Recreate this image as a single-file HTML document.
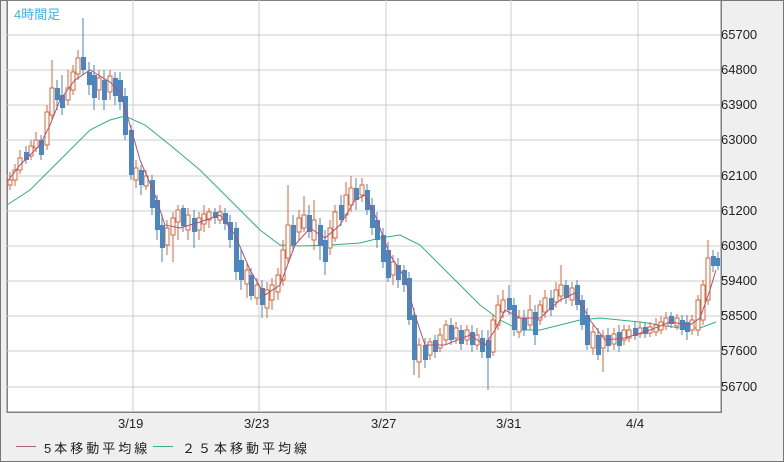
<!DOCTYPE html>
<html><head><meta charset="utf-8"><style>
html,body{margin:0;padding:0;width:784px;height:462px;overflow:hidden;background:#efefef;font-family:"Liberation Sans","Noto Sans CJK JP",sans-serif;}
#wrap{position:absolute;left:0;top:0;width:782px;height:460px;border:1px solid #777;background:#efefef;}
.yl{position:absolute;left:721px;font-size:13px;color:#222;}
.xl{position:absolute;top:416px;font-size:13px;color:#222;}
.lg{position:absolute;top:438px;font-size:13px;color:#222;letter-spacing:3px;}
svg .u{fill:#fff;stroke:#d9643a;stroke-width:1}
svg .d{fill:#4a86c0}
svg path,svg rect,svg line{shape-rendering:crispEdges}
</style></head><body>
<div id="wrap"></div>
<svg width="784" height="462" style="position:absolute;left:0;top:0">
<rect x="7" y="0" width="714" height="412" fill="#fff" stroke="#808080" stroke-width="1.5"/>
<g stroke="#ccc">
<line x1="7" x2="721" y1="35" y2="35"/><line x1="7" x2="721" y1="70" y2="70"/><line x1="7" x2="721" y1="105" y2="105"/><line x1="7" x2="721" y1="140" y2="140"/><line x1="7" x2="721" y1="176" y2="176"/><line x1="7" x2="721" y1="211" y2="211"/><line x1="7" x2="721" y1="246" y2="246"/><line x1="7" x2="721" y1="281" y2="281"/><line x1="7" x2="721" y1="316" y2="316"/><line x1="7" x2="721" y1="351" y2="351"/><line x1="7" x2="721" y1="387" y2="387"/>
<line x1="133" x2="133" y1="0" y2="412"/><line x1="259" x2="259" y1="0" y2="412"/><line x1="386" x2="386" y1="0" y2="412"/><line x1="511" x2="511" y1="0" y2="412"/><line x1="638" x2="638" y1="0" y2="412"/>
</g>
<polyline fill="none" stroke="#2fb07a" points="7,205 30,190 60,160 90,130 110,120 125,116 145,125 170,145 200,170 230,200 260,230 280,245 300,246 330,245 360,243 380,238 400,235 420,245 440,265 460,285 480,305 500,320 520,330 540,330 560,325 580,320 600,318 620,320 640,322 660,325 680,328 700,328 716,322"/>
<path stroke="#d9643a" fill="none" d="M10 172V190M15 164V186M20 150V174M31 140V160M36 132V152M47 105V150M52 60V120M68 70V105M73 65V95M78 50V80M99 70V100M110 70V100M136 160V188M146 170V190M167 220V255M173 212V262M178 205V240M188 208V240M199 212V240M204 205V232M209 208V228M220 205V224M247 262V298M257 278V305M267 282V318M272 278V310M278 268V300M283 240V286M288 185V264M299 210V240M304 196V232M314 200V250M330 220V255M335 205V242M346 182V222M351 176V212M362 178V202M393 255V285M419 338V378M430 338V360M440 328V352M446 320V345M456 322V344M467 325V345M477 328V350M493 315V356M498 295V330M503 290V318M519 310V338M530 295V330M540 300V325M545 290V318M556 282V308M561 265V302M572 282V306M593 325V355M603 330V372M614 328V350M624 325V345M629 325V342M640 322V338M650 322V337M656 318V336M661 316V334M666 312V330M677 314V330M692 315V335M698 295V336M703 280V325M708 240V305"/>
<path stroke="#4a86c0" fill="none" d="M26 146V164M41 135V160M57 80V110M62 75V115M83 18V75M89 62V95M94 65V110M104 70V110M115 72V105M120 72V110M125 88V140M131 125V180M141 165V195M152 175V215M157 195V240M162 215V262M183 205V232M194 210V248M215 208V224M225 208V230M230 215V248M236 222V280M241 250V290M251 268V300M262 280V318M293 215V252M309 205V238M320 218V260M325 230V275M341 195V226M356 178V210M367 184V215M372 198V235M377 212V248M383 228V268M388 242V282M398 258V288M404 265V292M409 272V325M414 308V375M425 338V368M435 335V358M451 318V345M461 325V350M472 325V352M482 330V358M488 330V390M509 285V315M514 298V336M524 310V336M535 305V345M551 290V316M566 280V304M577 280V310M582 295V330M587 308V350M598 328V360M608 328V352M619 325V352M635 322V340M645 322V338M671 312V328M682 315V335M687 315V340M713 250V272M718 252V270"/>
<g class="u">
<rect x="8" y="180" width="4" height="5"/><rect x="13" y="170" width="4" height="10"/><rect x="18" y="158" width="4" height="12"/><rect x="29" y="146" width="4" height="10"/><rect x="34" y="140" width="4" height="8"/><rect x="45" y="112" width="4" height="33"/><rect x="50" y="88" width="4" height="27"/><rect x="66" y="88" width="4" height="12"/><rect x="71" y="72" width="4" height="18"/><rect x="76" y="58" width="4" height="16"/><rect x="97" y="78" width="4" height="12"/><rect x="108" y="76" width="4" height="16"/><rect x="134" y="168" width="4" height="12"/><rect x="144" y="176" width="4" height="10"/><rect x="165" y="228" width="4" height="17"/><rect x="171" y="218" width="4" height="17"/><rect x="176" y="210" width="4" height="12"/><rect x="186" y="215" width="4" height="15"/><rect x="197" y="218" width="4" height="12"/><rect x="202" y="214" width="4" height="10"/><rect x="207" y="212" width="4" height="8"/><rect x="218" y="212" width="4" height="8"/><rect x="245" y="270" width="4" height="14"/><rect x="255" y="285" width="4" height="13"/><rect x="265" y="290" width="4" height="18"/><rect x="270" y="285" width="4" height="15"/><rect x="276" y="275" width="4" height="17"/><rect x="281" y="250" width="4" height="30"/><rect x="286" y="225" width="4" height="33"/><rect x="297" y="218" width="4" height="14"/><rect x="302" y="215" width="4" height="13"/><rect x="312" y="220" width="4" height="20"/><rect x="328" y="228" width="4" height="20"/><rect x="333" y="212" width="4" height="26"/><rect x="344" y="195" width="4" height="20"/><rect x="349" y="188" width="4" height="17"/><rect x="360" y="185" width="4" height="10"/><rect x="391" y="262" width="4" height="13"/><rect x="417" y="345" width="4" height="17"/><rect x="428" y="342" width="4" height="13"/><rect x="438" y="335" width="4" height="13"/><rect x="444" y="325" width="4" height="15"/><rect x="454" y="328" width="4" height="10"/><rect x="465" y="330" width="4" height="10"/><rect x="475" y="335" width="4" height="10"/><rect x="491" y="320" width="4" height="32"/><rect x="496" y="305" width="4" height="20"/><rect x="501" y="300" width="4" height="12"/><rect x="517" y="318" width="4" height="14"/><rect x="528" y="310" width="4" height="15"/><rect x="538" y="305" width="4" height="15"/><rect x="543" y="298" width="4" height="14"/><rect x="554" y="290" width="4" height="12"/><rect x="559" y="285" width="4" height="11"/><rect x="570" y="288" width="4" height="12"/><rect x="591" y="332" width="4" height="16"/><rect x="601" y="336" width="4" height="12"/><rect x="612" y="334" width="4" height="10"/><rect x="622" y="330" width="4" height="10"/><rect x="627" y="330" width="4" height="8"/><rect x="638" y="328" width="4" height="6"/><rect x="648" y="327" width="4" height="6"/><rect x="654" y="325" width="4" height="7"/><rect x="659" y="322" width="4" height="8"/><rect x="664" y="318" width="4" height="8"/><rect x="675" y="318" width="4" height="8"/><rect x="690" y="320" width="4" height="10"/><rect x="696" y="300" width="4" height="30"/><rect x="701" y="285" width="4" height="35"/><rect x="706" y="258" width="4" height="42"/>
</g>
<g class="d">
<rect x="24" y="152" width="5" height="8"/><rect x="39" y="140" width="5" height="15"/><rect x="55" y="88" width="5" height="12"/><rect x="60" y="95" width="5" height="13"/><rect x="81" y="57" width="5" height="13"/><rect x="87" y="72" width="5" height="13"/><rect x="92" y="75" width="5" height="23"/><rect x="102" y="80" width="5" height="20"/><rect x="113" y="78" width="5" height="18"/><rect x="118" y="80" width="5" height="22"/><rect x="123" y="96" width="5" height="39"/><rect x="129" y="130" width="5" height="45"/><rect x="139" y="170" width="5" height="15"/><rect x="150" y="180" width="5" height="28"/><rect x="155" y="200" width="5" height="30"/><rect x="160" y="225" width="5" height="23"/><rect x="181" y="208" width="5" height="18"/><rect x="192" y="218" width="5" height="14"/><rect x="213" y="212" width="5" height="6"/><rect x="223" y="213" width="5" height="11"/><rect x="228" y="222" width="5" height="18"/><rect x="234" y="228" width="5" height="44"/><rect x="239" y="260" width="5" height="20"/><rect x="249" y="275" width="5" height="21"/><rect x="260" y="288" width="5" height="17"/><rect x="291" y="225" width="5" height="20"/><rect x="307" y="215" width="5" height="17"/><rect x="318" y="225" width="5" height="21"/><rect x="323" y="240" width="5" height="22"/><rect x="339" y="205" width="5" height="15"/><rect x="354" y="188" width="5" height="12"/><rect x="365" y="190" width="5" height="20"/><rect x="370" y="205" width="5" height="23"/><rect x="375" y="220" width="5" height="20"/><rect x="381" y="235" width="5" height="27"/><rect x="386" y="250" width="5" height="28"/><rect x="396" y="265" width="5" height="15"/><rect x="402" y="270" width="5" height="15"/><rect x="407" y="278" width="5" height="42"/><rect x="412" y="315" width="5" height="45"/><rect x="423" y="345" width="5" height="15"/><rect x="433" y="340" width="5" height="12"/><rect x="449" y="325" width="5" height="15"/><rect x="459" y="330" width="5" height="14"/><rect x="470" y="332" width="5" height="13"/><rect x="480" y="338" width="5" height="14"/><rect x="486" y="340" width="5" height="18"/><rect x="507" y="298" width="5" height="12"/><rect x="512" y="305" width="5" height="25"/><rect x="522" y="318" width="5" height="12"/><rect x="533" y="312" width="5" height="23"/><rect x="549" y="298" width="5" height="12"/><rect x="564" y="285" width="5" height="13"/><rect x="575" y="285" width="5" height="20"/><rect x="580" y="300" width="5" height="25"/><rect x="585" y="315" width="5" height="30"/><rect x="596" y="335" width="5" height="20"/><rect x="606" y="335" width="5" height="11"/><rect x="617" y="332" width="5" height="14"/><rect x="633" y="328" width="5" height="8"/><rect x="643" y="327" width="5" height="7"/><rect x="669" y="316" width="5" height="8"/><rect x="680" y="320" width="5" height="10"/><rect x="685" y="322" width="5" height="10"/><rect x="711" y="256" width="5" height="10"/><rect x="716" y="258" width="4" height="8"/>
</g>
<polyline fill="none" stroke="#b0506f" points="7,182 20,165 40,145 50,125 60,100 75,80 90,70 110,82 120,92 130,125 140,160 155,195 165,225 180,228 200,222 220,215 235,235 250,270 265,295 280,285 295,245 310,228 325,238 340,225 355,200 365,195 375,215 390,255 405,278 415,315 425,345 445,345 470,335 485,345 495,330 505,310 520,318 540,318 560,300 575,293 590,320 605,340 625,338 650,330 670,322 690,325 700,318 710,290 716,270"/>
</svg>
<div class="yl" style="top:27px">65700</div>
<div class="yl" style="top:62px">64800</div>
<div class="yl" style="top:97px">63900</div>
<div class="yl" style="top:132px">63000</div>
<div class="yl" style="top:168px">62100</div>
<div class="yl" style="top:203px">61200</div>
<div class="yl" style="top:238px">60300</div>
<div class="yl" style="top:273px">59400</div>
<div class="yl" style="top:308px">58500</div>
<div class="yl" style="top:343px">57600</div>
<div class="yl" style="top:379px">56700</div>
<div class="xl" style="left:118px">3/19</div>
<div class="xl" style="left:244px">3/23</div>
<div class="xl" style="left:371px">3/27</div>
<div class="xl" style="left:496px">3/31</div>
<div class="xl" style="left:626px">4/4</div>
<div style="position:absolute;left:16px;top:446px;width:20px;height:1px;background:#b0607f"></div>
<div class="lg" style="left:44px">5本移動平均線</div>
<div style="position:absolute;left:153px;top:446px;width:20px;height:1px;background:#3cb07a"></div>
<div class="lg" style="left:182px">２５本移動平均線</div>
<div style="position:absolute;left:14px;top:4px;font-size:13px;color:#3cb4e6">4時間足</div>
</body></html>
